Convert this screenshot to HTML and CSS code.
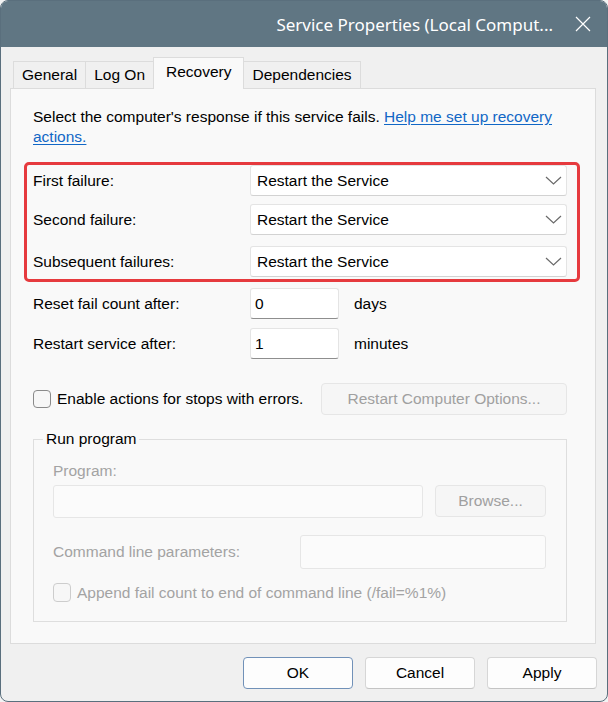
FILE: index.html
```
<!DOCTYPE html>
<html>
<head>
<meta charset="utf-8">
<link rel="stylesheet" href="styles.css">
</head>
<body>
<div class="window">
  <div class="titlebar">
    <span class="title">Service Properties (Local Comput...</span>
    <span class="close"><svg width="16" height="16" viewBox="0 0 16 16"><path d="M1 1 L15 15 M15 1 L1 15" stroke="#ffffff" stroke-width="1.2" fill="none"/></svg></span>
  </div>
  <div class="tabs">
    <div class="tab">General</div>
    <div class="tab">Log On</div>
    <div class="tab active">Recovery</div>
    <div class="tab">Dependencies</div>
  </div>
  <div class="panel">
    <p class="intro"><span>Select the computer's response if this service fails.</span> <a class="link">Help me set up recovery</a><br><a class="link">actions.</a></p>
    <div class="highlight">
      <div class="row">
        <span class="label">First failure:</span>
        <div class="select"><span>Restart the Service</span><svg class="chev" width="17" height="9" viewBox="0 0 17 9"><path d="M1 1 L8.5 8 L16 1" stroke="#6a6a6a" stroke-width="1.2" fill="none"/></svg></div>
      </div>
      <div class="row gap-8">
        <span class="label">Second failure:</span>
        <div class="select"><span>Restart the Service</span><svg class="chev" width="17" height="9" viewBox="0 0 17 9"><path d="M1 1 L8.5 8 L16 1" stroke="#6a6a6a" stroke-width="1.2" fill="none"/></svg></div>
      </div>
      <div class="row gap-11">
        <span class="label">Subsequent failures:</span>
        <div class="select"><span>Restart the Service</span><svg class="chev" width="17" height="9" viewBox="0 0 17 9"><path d="M1 1 L8.5 8 L16 1" stroke="#6a6a6a" stroke-width="1.2" fill="none"/></svg></div>
      </div>
    </div>
    <div class="row num-first">
      <span class="label">Reset fail count after:</span>
      <div class="textbox">0</div>
      <span class="unit">days</span>
    </div>
    <div class="row num-second">
      <span class="label">Restart service after:</span>
      <div class="textbox">1</div>
      <span class="unit">minutes</span>
    </div>
    <div class="check-row">
      <div class="check"><span class="box"></span><span>Enable actions for stops with errors.</span></div>
      <div class="btn disabled wide">Restart Computer Options...</div>
    </div>
    <fieldset class="group">
      <legend>Run program</legend>
      <div class="group-body">
        <div class="muted prog-label">Program:</div>
        <div class="prog-row">
          <div class="field prog-field"></div>
          <div class="btn disabled browse">Browse...</div>
        </div>
        <div class="cmd-row">
          <span class="muted cmd-label">Command line parameters:</span>
          <div class="field cmd-field"></div>
        </div>
        <div class="check check2"><span class="box box-disabled"></span><span class="muted">Append fail count to end of command line (/fail=%1%)</span></div>
      </div>
    </fieldset>
  </div>
  <div class="footer">
    <div class="btn primary">OK</div>
    <div class="btn">Cancel</div>
    <div class="btn">Apply</div>
  </div>
</div>
</body>
</html>
```
FILE: styles.css
```
html, body {
  margin: 0;
  padding: 0;
  background: #f3f3f3;
}
body {
  font-family: "Liberation Sans", Arial, sans-serif;
  font-size: 15.5px;
  color: #000;
}
.window {
  width: 608px;
  height: 702px;
  box-sizing: border-box;
  border: 1px solid #5a6f7d;
  border-radius: 8px;
  overflow: hidden;
  background: #f0f0f0;
}
.titlebar {
  height: 46px;
  background: #607683;
  display: flex;
  align-items: center;
  justify-content: flex-end;
  padding-right: 16px;
}
.title {
  font-family: "Noto Sans", "Open Sans", sans-serif;
  font-size: 17px;
  color: #ffffff;
  margin-right: 22px;
}
.close {
  display: flex;
  width: 16px;
  height: 16px;
}
.tabs {
  height: 41px;
  display: flex;
  align-items: flex-end;
  margin-left: 12px;
  position: relative;
  z-index: 2;
}
.tab {
  height: 27px;
  box-sizing: border-box;
  padding: 0 8px;
  display: flex;
  align-items: center;
  border: 1px solid #dcdcdc;
  border-bottom: none;
  margin-right: -1px;
  background: #f0f0f0;
}
.tab.active {
  height: 32px;
  margin-bottom: -1px;
  padding: 0 12px 3px;
  background: #f9f9f9;
  position: relative;
  z-index: 3;
}
.panel {
  margin: 0 11px 0 9px;
  height: 556px;
  box-sizing: border-box;
  border: 1px solid #dcdcdc;
  background: #f9f9f9;
  padding: 18px 28px 0 22px;
  position: relative;
  z-index: 1;
}
.intro {
  margin: 0;
  line-height: 20px;
}
.link {
  color: #1167c6;
  text-decoration: underline;
  text-underline-offset: 2px;
}
.highlight {
  margin: 15px -13px 0 -9px;
  border: 3px solid #e63a3e;
  border-radius: 5px;
  padding: 0 10px 2px 6px;
}
.row {
  display: flex;
  align-items: center;
  height: 31px;
}
.gap-8 { margin-top: 8px; }
.gap-11 { margin-top: 11px; }
.num-first { margin-top: 6px; }
.num-second { margin-top: 9px; }
.label {
  width: 217px;
  flex: none;
}
.select {
  width: 317px;
  height: 31px;
  box-sizing: border-box;
  background: #ffffff;
  border: 1px solid #e4e4e4;
  border-bottom-color: #d2d2d2;
  border-radius: 3px;
  display: flex;
  align-items: center;
  justify-content: space-between;
  padding: 0 4px 0 6px;
}
.chev {
  display: block;
}
.textbox {
  width: 89px;
  height: 31px;
  box-sizing: border-box;
  background: #ffffff;
  border: 1px solid #e4e4e4;
  border-bottom: 1px solid #8e8e8e;
  border-radius: 3px;
  padding-left: 4px;
  display: flex;
  align-items: center;
}
.unit {
  margin-left: 15px;
}
.check-row {
  display: flex;
  align-items: center;
  height: 32px;
  margin-top: 24px;
}
.check {
  display: flex;
  align-items: center;
}
.box {
  width: 18px;
  height: 18px;
  box-sizing: border-box;
  border: 1px solid #8a8a8a;
  border-radius: 4px;
  background: #f7f7f7;
  margin-right: 6px;
  flex: none;
}
.box-disabled {
  border-color: #cdcdcd;
  height: 19px;
}
.btn {
  width: 110px;
  height: 32px;
  box-sizing: border-box;
  background: #fdfdfd;
  border: 1px solid #d6d6d6;
  border-bottom-color: #c4c4c4;
  border-radius: 4px;
  display: flex;
  align-items: center;
  justify-content: center;
}
.btn.disabled {
  background: #f6f6f6;
  border: 1px solid #e6e6e6;
  color: #a0a0a0;
}
.btn.wide {
  width: 246px;
  margin-left: auto;
}
.group {
  margin: 15px 0 0;
  padding: 0;
  border: 1px solid #dedede;
  min-width: 0;
}
.group legend {
  margin-left: 9px;
  padding: 0 3px;
  line-height: 18px;
}
.group-body {
  padding: 14px 20px 19px 19px;
}
.muted {
  color: #a3a3a3;
}
.prog-label {
  line-height: 18px;
}
.prog-row {
  display: flex;
  align-items: flex-start;
  margin-top: 5px;
}
.field {
  box-sizing: border-box;
  background: #fbfbfb;
  border: 1px solid #e6e6e6;
  border-radius: 3px;
}
.prog-field {
  width: 370px;
  height: 33px;
}
.browse {
  width: 111px;
  margin-left: 12px;
}
.cmd-row {
  display: flex;
  align-items: center;
  margin-top: 17px;
  height: 34px;
}
.cmd-label {
  width: 247px;
  flex: none;
}
.cmd-field {
  width: 247px;
  height: 34px;
}
.check2 {
  margin-top: 14px;
  height: 19px;
}
.footer {
  display: flex;
  justify-content: flex-end;
  gap: 12px;
  padding: 13px 10px 0 0;
}
.btn.primary {
  border-color: #7191b8;
}
```
